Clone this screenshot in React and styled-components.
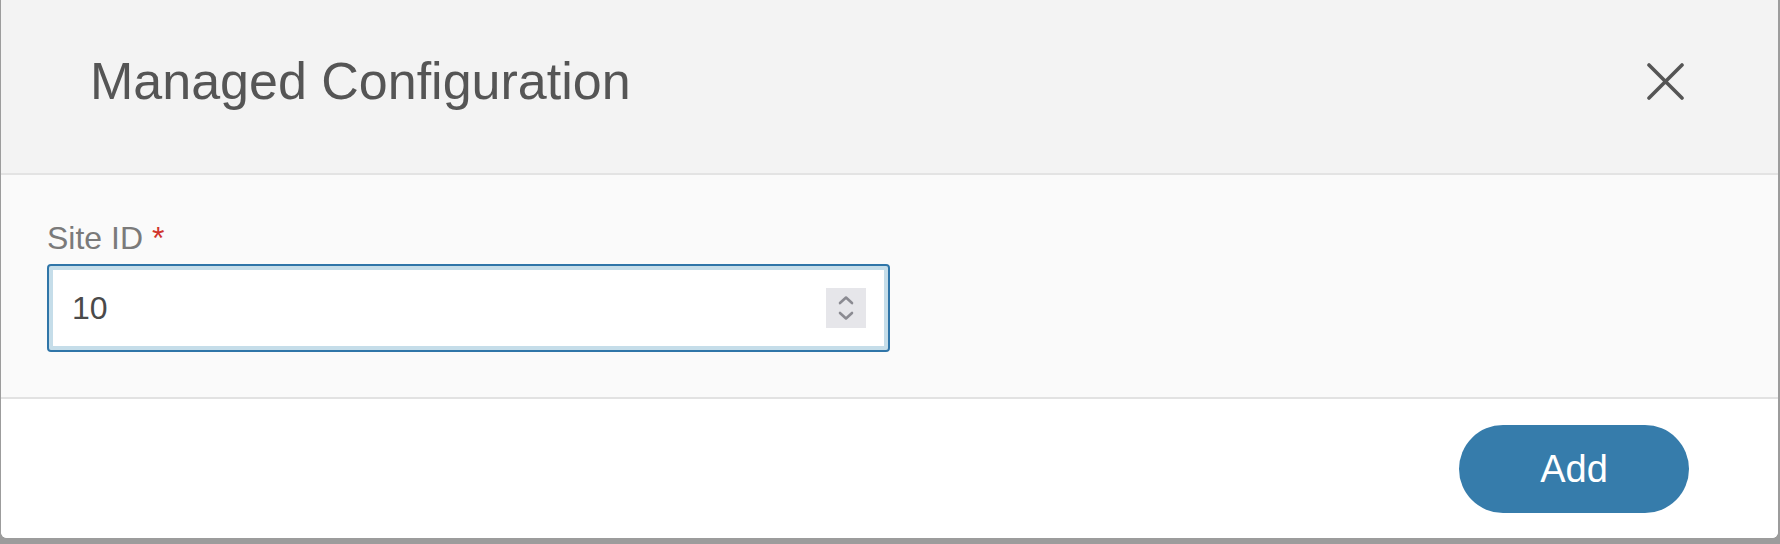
import React from "react";
import styled, { createGlobalStyle } from "styled-components";

const Global = createGlobalStyle`
  html, body {
    margin: 0;
    padding: 0;
    background: #9c9c9c;
    font-family: "Liberation Sans", Arial, sans-serif;
  }
  * { box-sizing: border-box; }
`;

const Dialog = styled.div`
  margin-left: 1px;
  width: 1777px;
  border-radius: 0 0 6px 6px;
  overflow: hidden;
  background: #ffffff;
`;

const Header = styled.div`
  height: 175px;
  display: flex;
  align-items: flex-start;
  justify-content: space-between;
  padding: 55px 94px 0 89px;
  background: #f3f3f3;
  border-bottom: 2px solid #e3e3e3;
`;

const Title = styled.h1`
  margin: 0;
  font-family: "Liberation Sans", Arial, sans-serif;
  font-weight: 400;
  font-size: 52px;
  line-height: 52px;
  color: #555555;
  white-space: nowrap;
`;

const CloseButton = styled.button`
  margin-top: 8px;
  width: 37px;
  height: 37px;
  padding: 0;
  border: none;
  background: transparent;
  cursor: pointer;
  display: block;
  svg { display: block; }
`;

const Body = styled.div`
  height: 224px;
  padding: 47px 0 0 46px;
  background: #fafafa;
  border-bottom: 2px solid #e2e2e2;
`;

const Label = styled.label`
  display: block;
  font-size: 32px;
  line-height: 32px;
  color: #7a7a7a;
  margin-bottom: 10px;
`;

const Required = styled.span`
  color: #d0342c;
  margin-left: 9px;
`;

const InputBox = styled.div`
  width: 843px;
  height: 88px;
  display: flex;
  align-items: center;
  border: 2px solid #2f75a8;
  border-radius: 4px;
  box-shadow: inset 0 0 0 4px #c5dde9;
  background: #ffffff;
  padding: 0 22px 0 23px;
`;

const NumberText = styled.input`
  flex: 1;
  border: none;
  outline: none;
  background: transparent;
  font-family: "Liberation Sans", Arial, sans-serif;
  font-size: 32px;
  color: #4a4a4a;
  padding: 0;
  min-width: 0;
`;

const Spinner = styled.div`
  width: 40px;
  height: 40px;
  background: #e6e6ea;
  display: flex;
  align-items: center;
  justify-content: center;
  svg { display: block; }
`;

const Footer = styled.div`
  height: 139px;
  display: flex;
  align-items: flex-start;
  justify-content: flex-end;
  padding: 26px 89px 0 0;
  background: #ffffff;
`;

const PrimaryButton = styled.button`
  width: 230px;
  height: 88px;
  border: none;
  border-radius: 44px;
  background: #367cab;
  color: #ffffff;
  font-family: "Liberation Sans", Arial, sans-serif;
  font-size: 38px;
  cursor: pointer;
  padding: 0;
`;

export default function App() {
  return (
    <>
      <Global />
      <Dialog>
        <Header>
          <Title>Managed Configuration</Title>
          <CloseButton aria-label="Close">
            <svg width="37" height="37" viewBox="0 0 37 37">
              <path
                d="M2 2 L35 35 M35 2 L2 35"
                stroke="#555555"
                strokeWidth="3.6"
                strokeLinecap="round"
                fill="none"
              />
            </svg>
          </CloseButton>
        </Header>
        <Body>
          <Label>
            Site ID<Required>*</Required>
          </Label>
          <InputBox>
            <NumberText type="text" defaultValue="10" />
            <Spinner>
              <svg width="20" height="30" viewBox="0 0 20 30">
                <path
                  d="M4 10 L10 4.5 L16 10 M4 20 L10 25.5 L16 20"
                  stroke="#8b8b92"
                  strokeWidth="2.6"
                  strokeLinecap="round"
                  strokeLinejoin="round"
                  fill="none"
                />
              </svg>
            </Spinner>
          </InputBox>
        </Body>
        <Footer>
          <PrimaryButton>Add</PrimaryButton>
        </Footer>
      </Dialog>
    </>
  );
}
